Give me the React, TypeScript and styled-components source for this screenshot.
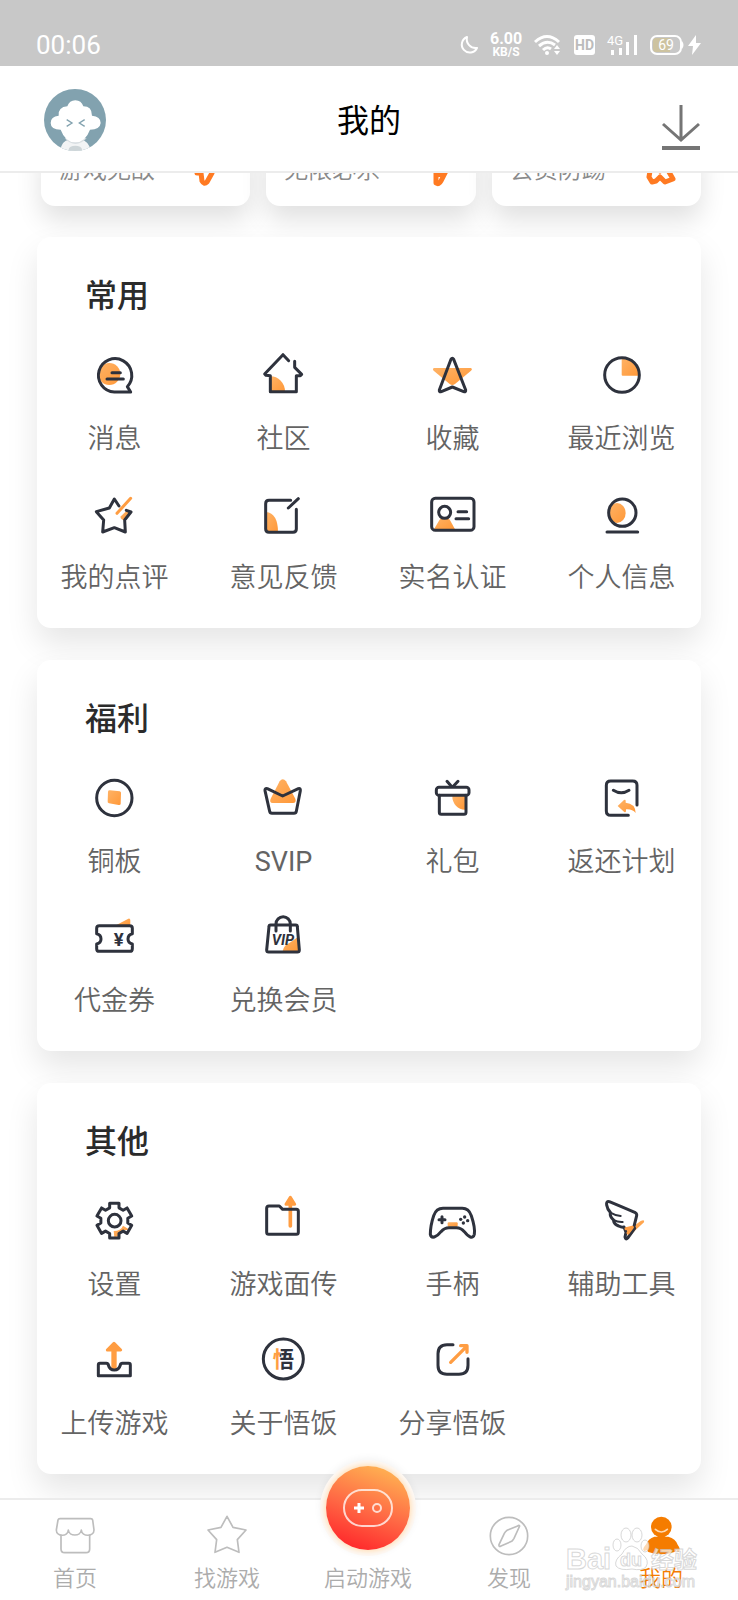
import React from 'react';
import styled, { createGlobalStyle } from 'styled-components';

const INK = '#2e323d';
const ORANGE = '#ff9d42';

const GlobalStyle = createGlobalStyle`
  *, *::before, *::after { box-sizing: border-box; }
  body {
    margin: 0;
    background: #fff;
    font-family: Roboto, "Noto Sans CJK SC", sans-serif;
    -webkit-font-smoothing: antialiased;
  }
  a { color: inherit; text-decoration: none; }
  svg { display: block; overflow: visible; }
`;

const Page = styled.div`
  position: relative;
  display: flex;
  flex-direction: column;
  min-height: 100vh;
  overflow: hidden;
`;

/* ---------- status bar ---------- */

const StatusBar = styled.div`
  display: flex;
  justify-content: space-between;
  align-items: center;
  height: 66px;
  padding: 24px 37px 0 36px;
  background: #c8c8c8;
  color: #fff;
`;

const Clock = styled.time`
  font-size: 26px;
  line-height: 32px;
  font-weight: 400;
`;

const StatusIcons = styled.div`
  display: flex;
  align-items: center;
  gap: 12px;
`;

const Speed = styled.div`
  width: 32px;
  font-weight: 700;
  font-size: 16px;
  line-height: 14px;
  text-align: center;
`;

const SpeedUnit = styled.div`
  font-size: 12px;
  line-height: 12px;
`;

const Power = styled.div`
  display: flex;
  align-items: center;
  gap: 4px;
`;

const StatusText = styled.text`
  font-family: Roboto, sans-serif;
  fill: ${(p) => p.fill || '#fff'};
`;

/* ---------- header ---------- */

const Header = styled.header`
  display: grid;
  grid-template-columns: 1fr auto 1fr;
  align-items: center;
  height: 107px;
  padding: 2px 38px 0 44px;
  background: #fff;
  border-bottom: 2px solid #ececec;
  position: relative;
  z-index: 1;
`;

const IconButton = styled.button<{ $end?: boolean }>`
  justify-self: ${(p) => (p.$end ? 'end' : 'start')};
  padding: 0;
  border: 0;
  background: none;
  cursor: pointer;
`;

const PageTitle = styled.h1`
  margin: 0;
  padding: 2px 6px 0 0;
  font-size: 32px;
  line-height: 44px;
  font-weight: 400;
  color: #000;
`;

/* ---------- content ---------- */

const Content = styled.main`
  flex: 1;
  overflow: hidden;
  padding-bottom: 24px;
`;

const PromoStrip = styled.div`
  display: grid;
  grid-template-columns: repeat(3, 1fr);
  grid-template-rows: 33px;
  gap: 16px;
  align-items: end;
  margin-bottom: 31px;
  padding: 0 37px 0 41px;
`;

const PromoCard = styled.a`
  display: flex;
  justify-content: space-between;
  align-items: center;
  height: 72px;
  padding: 0 22px 0 18px;
  border-radius: 14px;
  background: #fff;
  box-shadow: 0 14px 26px rgba(0, 0, 0, 0.12);
  font-size: 24px;
  line-height: 32px;
  font-weight: 350;
  color: #8a8a8a;
`;

const Card = styled.section`
  position: relative;
  margin: 0 37px 32px;
  padding: 37px 0 32px;
  border-radius: 14px;
  background: #fff;
  box-shadow: 0 16px 32px rgba(0, 0, 0, 0.1);

  &:last-child { margin-bottom: 0; }
`;

const CardTitle = styled.h2`
  margin: 0 0 33px;
  padding-left: 48px;
  font-size: 32px;
  line-height: 44px;
  font-weight: 500;
  color: #2b2b2b;
`;

const Grid = styled.div`
  display: grid;
  grid-template-columns: repeat(4, 1fr);
  row-gap: 33px;
  margin: 0 -5px 0 -7px;
`;

const Entry = styled.a<{ $latin?: boolean }>`
  display: flex;
  flex-direction: column;
  align-items: center;
  gap: 22px;
  font-size: 27px;
  line-height: 36px;
  font-weight: ${(p) => (p.$latin ? 400 : 350)};
  color: #646464;
  white-space: nowrap;
`;

const Art = styled.svg`
  width: 48px;
  height: 48px;
  fill: none;
  stroke: ${INK};
  stroke-width: 9;
  stroke-linecap: round;
  stroke-linejoin: round;
`;

/* ---------- tab bar ---------- */

const TabBar = styled.nav`
  position: relative;
  display: grid;
  grid-template-columns: 1fr 1fr 130px 1fr 1fr;
  grid-template-rows: 100px;
  height: 102px;
  border-top: 2px solid #ececec;
  background: #fff;
`;

const Tab = styled.a<{ $active?: boolean }>`
  display: flex;
  flex-direction: column;
  align-items: center;
  justify-content: flex-end;
  gap: 3px;
  padding: 0 2px 5px 0;
  font-size: 22px;
  line-height: 32px;
  font-weight: 350;
  color: ${(p) => (p.$active ? '#f57c00' : '#acacac')};
`;

const TabArt = styled(Art)`
  stroke: #bdbdbd;
  stroke-width: 5;
`;

const Launch = styled.span`
  display: flex;
  align-items: center;
  justify-content: center;
  flex: none;
  width: 84px;
  height: 84px;
  margin-bottom: 10px;
  border-radius: 50%;
  background: linear-gradient(200deg, #ffb352 8%, #ff6a45 52%, #ff2d2d 88%);
  box-shadow: 0 0 4px 2px #ffe3c0, 0 0 0 6px #fdf8f4, 0 -2px 8px 5px rgba(0, 0, 0, 0.06);
`;

const Watermark = styled.svg`
  position: absolute;
  right: 34px;
  bottom: 8px;
  width: 138px;
  height: 76px;
  font-family: "Liberation Sans", "Noto Sans CJK SC", sans-serif;
  font-weight: 700;
  fill: rgba(255, 255, 255, 0.7);
  stroke: rgba(190, 190, 190, 0.6);
  stroke-width: 1;
  pointer-events: none;
`;

/* ---------- icon drawings, all on a 144-unit board ---------- */

const solid = { fill: 'url(#amber)', stroke: 'none' };

const gearPath = (() => {
  const at = (r: number, deg: number) => {
    const a = (deg * Math.PI) / 180;
    return `${(72 + r * Math.cos(a)).toFixed(1)} ${(71 + r * Math.sin(a)).toFixed(1)}`;
  };
  const pts: string[] = [];
  for (let k = 0; k < 6; k++) {
    const d = -90 + 60 * k;
    pts.push(at(41, d - 20), at(54, d - 15), at(54, d + 15), at(41, d + 20));
  }
  return `M${pts.join('L')}Z`;
})();

const icons: Record<string, React.ReactNode> = {
  message: (
    <>
      <circle cx="57" cy="69" r="33" {...solid} />
      <path d="M111 107A50 50 0 1 0 72 123H121ZM65 65H90M50 84H99" />
    </>
  ),
  home: (
    <>
      <path d="M33 76A44 46 0 0 1 77 122H33Z" {...solid} />
      <path d="M88 29L71 11L16 69L20 73L33 74V122H111V74L123 74L127 70L106 49V31" />
    </>
  ),
  favorite: (
    <>
      <path d="M17 51H127Q134 53 128 59L80 99Q72 105 64 99L16 59Q11 53 17 51Z" {...solid} />
      <path d="M68 25Q72 18 76 25L112 117Q113 124 106 122L72 108L39 122Q32 124 33 117Z" />
    </>
  ),
  recent: (
    <>
      <path d="M73 20A52 52 0 0 1 126 74H76Q73 74 73 71Z" {...solid} />
      <circle cx="74" cy="72" r="52" />
    </>
  ),
  review: (
    <>
      <path d="M90 80L108 63L122 66L103 91Q92 90 90 80Z" {...solid} />
      <path d="M86 48L72 27L57 54L18 65L40 90L37 126L72 113L105 126L103 90L122 66L108 61" />
      <path d="M121 25L80 70" stroke={ORANGE} />
    </>
  ),
  feedback: (
    <>
      <path d="M20 66Q56 70 56 127H20Z" {...solid} />
      <path d="M94 31H29Q19 31 19 41V117Q19 127 29 127H101Q111 127 111 117V58M87 54L117 26" />
    </>
  ),
  idcard: (
    <>
      <path d="M17 118L32 92Q49 66 66 92L80 118Z" {...solid} />
      <rect x="10" y="25" width="127" height="96" rx="11" />
      <circle cx="49" cy="67" r="18" fill="#fff" />
      <path d="M89 65H115M83 86H121" />
    </>
  ),
  profile: (
    <>
      <ellipse cx="59" cy="69" rx="26" ry="30" {...solid} />
      <circle cx="75" cy="68" r="41" />
      <path d="M29 126H121" />
    </>
  ),
  coin: (
    <>
      <path d="M53 53Q54 48 59 49L88 52Q93 53 92 58L91 90Q90 94 85 93L56 88Q51 87 52 82Z" {...solid} />
      <circle cx="72" cy="72" r="53" />
    </>
  ),
  crown: (
    <>
      <path d="M61 22Q70 10 80 22L108 74Q112 86 101 87H40Q29 86 34 74Z" {...solid} />
      <path d="M24 44L70 66L117 44Q124 42 123 50L111 112Q110 118 104 118H38Q32 118 31 112L17 50Q16 42 24 44Z" />
    </>
  ),
  gift: (
    <>
      <path d="M72 66A38 40 0 0 0 110 107V66Z" {...solid} />
      <rect x="24" y="40" width="98" height="24" rx="8" />
      <path d="M33 64V115Q33 121 39 121H107Q113 121 113 115V64M56 22L69 37M89 22L75 37" />
    </>
  ),
  refund: (
    <>
      <path d="M93 124H40Q27 124 27 111V34Q27 21 40 21H106Q119 21 119 34V93M48 49Q72 64 95 49" />
      <path d="M61 96L80 78Q85 75 85 81V86Q114 88 115 117Q104 104 86 106V111Q85 117 80 113Z" {...solid} />
    </>
  ),
  ticket: (
    <>
      <path d="M74 38L114 17Q119 15 120 21V38Z" {...solid} />
      <path d="M27 38H118Q126 38 126 46V62Q113 65 113 78Q113 90 126 93V107Q126 115 118 115H27Q19 115 19 107V93Q32 90 32 78Q32 65 19 62V46Q19 38 27 38Z" />
      <text x="85" y="98" textAnchor="middle" fontFamily="Roboto" fontWeight="700" fontSize="56" fill={INK} stroke="none">¥</text>
    </>
  ),
  bag: (
    <>
      <path d="M70 114Q74 96 90 90L116 72L119 114Z" {...solid} />
      <path d="M34 36H109Q114 36 114 41L120 111Q120 117 114 117H28Q22 117 22 111L29 41Q29 36 34 36ZM50 54V33A21 21 0 0 1 93 33V54" />
      <text x="71" y="97" textAnchor="middle" fontFamily="Roboto" fontWeight="700" fontStyle="italic" fontSize="44" fill={INK} stroke="none">VIP</text>
    </>
  ),
  settings: (
    <>
      <path d="M70 102Q92 102 98 86L118 98L98 100L86 118L72 120Z" {...solid} />
      <path d={gearPath} />
      <circle cx="73" cy="71" r="19" fill="#fff" />
    </>
  ),
  folder: (
    <>
      <path d="M93 20V87" stroke={ORANGE} strokeWidth="11" />
      <path d="M22 34Q22 27 29 27H60L70 37H111Q117 37 117 43V106Q117 112 111 112H28Q22 112 22 106Z" />
      <path d="M93 1L106 22H80Z" fill={ORANGE} stroke={ORANGE} />
    </>
  ),
  gamepad: (
    <>
      <rect x="58" y="76" width="30" height="13" rx="3" {...solid} />
      <path d="M44 34H102Q121 34 129 56Q141 92 138 112Q135 123 126 120Q118 117 108 104Q98 92 84 92H62Q48 92 38 104Q28 117 18 120Q8 122 6 112Q6 86 16 56Q24 34 44 34Z" />
      <path d="M41 59V77M32 68H50" />
      <g fill={INK} stroke="none">
        <circle cx="109" cy="60" r="5" />
        <circle cx="97" cy="67" r="5" />
        <circle cx="118" cy="71" r="5" />
        <circle cx="105" cy="78" r="5" />
      </g>
    </>
  ),
  wing: (
    <>
      <path d="M80 92L104 91L130 72Q143 66 140 76L114 100L90 126L93 106L82 104Z" {...solid} />
      <path d="M110 88L118 56Q119 50 114 47Q70 28 36 14Q26 12 28 24Q30 37 39 46Q37 60 48 68Q50 82 64 87Q74 92 80 90L86 106L83 120Q85 130 91 123L112 94" />
      <path d="M39 47Q54 56 70 57M48 69Q62 76 76 75" strokeWidth="6" />
      <path d="M86 95L105 91L92 108" stroke={ORANGE} />
    </>
  ),
  upload: (
    <>
      <path d="M71 40V104" stroke={ORANGE} strokeWidth="16" strokeLinecap="butt" />
      <path d="M71 22L91 42H51Z" fill={ORANGE} stroke={ORANGE} />
      <path d="M29 82H48Q53 82 54 87Q58 102 72 102Q86 102 90 87Q91 82 96 82H115Q120 82 120 87V119H24V87Q24 82 29 82Z" />
    </>
  ),
  about: (
    <>
      <circle cx="72" cy="69" r="60" />
      <text x="72" y="93" textAnchor="middle" fontFamily="Noto Sans CJK SC" fontWeight="700" fontSize="64" fill="url(#split)" stroke="none">悟</text>
    </>
  ),
  share: (
    <>
      <path d="M74 26H56Q29 26 29 53V88Q29 115 56 115H92Q119 115 119 88V68" />
      <path d="M67 79L112 34M97 29H116V49" stroke={ORANGE} strokeWidth="10" />
    </>
  ),
  tabHome: (
    <>
      <path d="M27 20H119Q124 20 125 24L129 54C129 74 93 76 91 54C89 74 54 74 52 54C50 76 16 74 16 54L21 24Q22 20 27 20Z" />
      <path d="M30 70V111Q30 122 41 122H105Q116 122 116 111V70" />
    </>
  ),
  tabStar: (
    <path d="M72 13L90 46L129 54L103 83L108 121L72 106L36 121L41 83L15 54L54 46Z" />
  ),
  tabCompass: (
    <>
      <circle cx="72" cy="72" r="56" />
      <path d="M104 42Q102 38 98 42L66 55Q61 59 58 64L42 98Q41 106 48 102L80 88Q84 84 87 79Z" />
    </>
  ),
  tabMe: (
    <>
      <path d="M52 74H94Q116 80 122 98Q132 112 126 118Q122 122 118 114L112 120Q94 127 73 127Q52 127 34 120L28 114Q22 120 19 114Q17 108 28 96Q34 80 52 74Z" fill="#f57c00" stroke="none" />
      <circle cx="73" cy="45" r="31" fill="#f57c00" stroke="none" />
      <path d="M55 52Q73 68 91 52" stroke="#ffd9b0" />
    </>
  ),
};

type EntryData = { icon: string; label: string; latin?: boolean };

const sections: { title: string; entries: EntryData[] }[] = [
  {
    title: '常用',
    entries: [
      { icon: 'message', label: '消息' },
      { icon: 'home', label: '社区' },
      { icon: 'favorite', label: '收藏' },
      { icon: 'recent', label: '最近浏览' },
      { icon: 'review', label: '我的点评' },
      { icon: 'feedback', label: '意见反馈' },
      { icon: 'idcard', label: '实名认证' },
      { icon: 'profile', label: '个人信息' },
    ],
  },
  {
    title: '福利',
    entries: [
      { icon: 'coin', label: '铜板' },
      { icon: 'crown', label: 'SVIP', latin: true },
      { icon: 'gift', label: '礼包' },
      { icon: 'refund', label: '返还计划' },
      { icon: 'ticket', label: '代金券' },
      { icon: 'bag', label: '兑换会员' },
    ],
  },
  {
    title: '其他',
    entries: [
      { icon: 'settings', label: '设置' },
      { icon: 'folder', label: '游戏面传' },
      { icon: 'gamepad', label: '手柄' },
      { icon: 'wing', label: '辅助工具' },
      { icon: 'upload', label: '上传游戏' },
      { icon: 'about', label: '关于悟饭' },
      { icon: 'share', label: '分享悟饭' },
    ],
  },
];

const promos = [
  { label: '游戏无敌', d: 'M1 10V21H5L6 29Q8 33 11 30L16 21L20 10' },
  { label: '无限必杀', d: 'M14 10V31Q17 33 19 29L24 19L26 10M18 12V25' },
  { label: '会员防踢', d: 'M4 13L2 25L5 30L9 29L13 25L18 30L26 27L22 20V10M9 15L13 19L17 15' },
];

const Defs = () => (
  <svg width="0" height="0" aria-hidden="true">
    <defs>
      <linearGradient id="amber" x1="0" y1="0" x2="1" y2="1">
        <stop offset="0" stopColor="#ffb366" />
        <stop offset="1" stopColor="#ff9838" />
      </linearGradient>
      <linearGradient id="split" x1="0" y1="0" x2="1" y2="0">
        <stop offset="0.36" stopColor={ORANGE} />
        <stop offset="0.36" stopColor={INK} />
      </linearGradient>
    </defs>
  </svg>
);

const Status = () => (
  <StatusBar>
    <Clock>00:06</Clock>
    <StatusIcons>
      <svg width="18" height="20" viewBox="0 0 18 20" fill="none" stroke="#fff" strokeWidth="2" strokeLinejoin="round">
        <path d="M7 2A8 8 0 1 0 17 13A9 9 0 0 1 7 2Z" />
      </svg>
      <Speed>
        6.00
        <SpeedUnit>KB/S</SpeedUnit>
      </Speed>
      <svg width="28" height="20" viewBox="0 0 28 20" fill="none" stroke="#fff" strokeWidth="3">
        <path d="M1 7Q13 -4 25 7M5 11Q13 4 21 10M9 15Q13 11 17 14" />
        <circle cx="13" cy="18" r="2" fill="#fff" stroke="none" />
        <path d="M20 14L23 10L26 14ZM20 16L23 20L26 16Z" fill="#fff" stroke="none" />
      </svg>
      <svg width="21" height="20" viewBox="0 0 21 20">
        <rect width="21" height="20" rx="3" fill="#fff" />
        <StatusText x="10.5" y="15" textAnchor="middle" fontSize="14" fontWeight="700" fill="#bcbcbc">HD</StatusText>
      </svg>
      <svg width="31" height="20" viewBox="0 0 31 20" fill="#fff">
        <StatusText x="0" y="10" fontSize="13">4G</StatusText>
        <path d="M4 15H7V20H4ZM12 13H15V20H12ZM19 7H22V20H19ZM27 0H30V20H27Z" />
      </svg>
      <Power>
        <svg width="34" height="20" viewBox="0 0 34 20">
          <path d="M6 3H20V17H6Q3 17 3 14V6Q3 3 6 3Z" fill="#cdc3a0" />
          <rect x="1" y="1" width="30" height="18" rx="6" fill="none" stroke="#fff" strokeWidth="2" />
          <path d="M32 6Q35 10 32 14Z" fill="#fff" />
          <StatusText x="16" y="15" textAnchor="middle" fontSize="14">69</StatusText>
        </svg>
        <svg width="13" height="20" viewBox="0 0 13 20" fill="#fff">
          <path d="M8 0L0 11H5L4 20L13 8H8Z" />
        </svg>
      </Power>
    </StatusIcons>
  </StatusBar>
);

const Avatar = () => (
  <svg width="62" height="62" viewBox="0 0 186 186">
    <defs>
      <clipPath id="face"><circle cx="93" cy="93" r="93" /></clipPath>
    </defs>
    <g clipPath="url(#face)">
      <rect width="186" height="186" fill="#82a2af" />
      <path d="M52 172Q58 150 93 150Q128 150 136 172L140 186H48Z" fill="#f2f4f5" />
      <ellipse cx="94" cy="182" rx="20" ry="12" fill="#cdd5d8" />
      <path d="M62 148Q94 182 128 148Z" fill="#d9dfe2" />
      <path d="M44 80Q42 54 70 52Q76 34 94 34Q112 34 118 52Q144 52 144 80Q170 82 170 102Q168 122 138 122Q124 160 94 160Q64 160 50 122Q20 122 20 102Q20 82 44 80Z" fill="#fff" />
    </g>
    <path d="M68 92L84 102L68 112M122 92L106 102L122 112" fill="none" stroke="#82a2af" strokeWidth="4" />
  </svg>
);

const TabItem = ({ icon, label, active }: { icon: string; label: string; active?: boolean }) => (
  <Tab href="#" $active={active} aria-current={active ? 'page' : undefined}>
    <TabArt viewBox="0 0 144 144" aria-hidden="true">{icons[icon]}</TabArt>
    {label}
  </Tab>
);

export default function App() {
  return (
    <Page>
      <GlobalStyle />
      <Status />
      <Header>
        <IconButton aria-label="头像"><Avatar /></IconButton>
        <PageTitle>我的</PageTitle>
        <IconButton $end aria-label="下载">
          <svg width="38" height="62" viewBox="0 0 38 62" fill="none" stroke="#757575" strokeWidth="3">
            <path d="M19 16V51M1 35L19 51L37 35" />
            <path d="M0 59H38" strokeWidth="4" />
          </svg>
        </IconButton>
      </Header>
      <Content>
        <PromoStrip>
          {promos.map((p) => (
            <PromoCard href="#" key={p.label}>
              {p.label}
              <svg width="32" height="36" viewBox="0 0 32 36" fill="none" stroke="#ff7a22" strokeWidth="5" strokeLinejoin="round">
                <path d={p.d} />
              </svg>
            </PromoCard>
          ))}
        </PromoStrip>
        {sections.map((s) => (
          <Card key={s.title}>
            <CardTitle>{s.title}</CardTitle>
            <Grid>
              {s.entries.map((e) => (
                <Entry href="#" key={e.label} $latin={e.latin}>
                  <Art viewBox="2 0 144 144" aria-hidden="true">{icons[e.icon]}</Art>
                  {e.label}
                </Entry>
              ))}
            </Grid>
          </Card>
        ))}
      </Content>
      <TabBar>
        <TabItem icon="tabHome" label="首页" />
        <TabItem icon="tabStar" label="找游戏" />
        <Tab href="#">
          <Launch>
            <svg width="50" height="38" viewBox="0 0 50 38" fill="none" stroke="#fff" strokeOpacity="0.75" strokeWidth="2">
              <rect x="1" y="1" width="48" height="36" rx="18" />
              <path d="M16 14V24M11 19H21" strokeWidth="3" strokeOpacity="1" />
              <circle cx="34" cy="19" r="4" />
            </svg>
          </Launch>
          启动游戏
        </Tab>
        <TabItem icon="tabCompass" label="发现" />
        <TabItem icon="tabMe" label="我的" active />
        <Watermark viewBox="0 0 138 76" aria-hidden="true">
          <ellipse cx="51" cy="29" rx="4" ry="6" />
          <ellipse cx="60" cy="19" rx="5" ry="7" />
          <ellipse cx="71" cy="19" rx="5" ry="7" />
          <ellipse cx="79" cy="30" rx="4" ry="6" />
          <path d="M66 30Q72 31 76 38Q84 44 80 51Q76 55 66 53Q54 55 50 50Q48 44 56 38Q60 30 66 30Z" />
          <text x="0" y="53" fontSize="29">Bai</text>
          <text x="54" y="50" fontSize="18">du</text>
          <text x="85" y="52" fontSize="23">经验</text>
          <text x="0" y="71" fontSize="16" fontWeight="400">jingyan.baidu.com</text>
        </Watermark>
      </TabBar>
      <Defs />
    </Page>
  );
}
